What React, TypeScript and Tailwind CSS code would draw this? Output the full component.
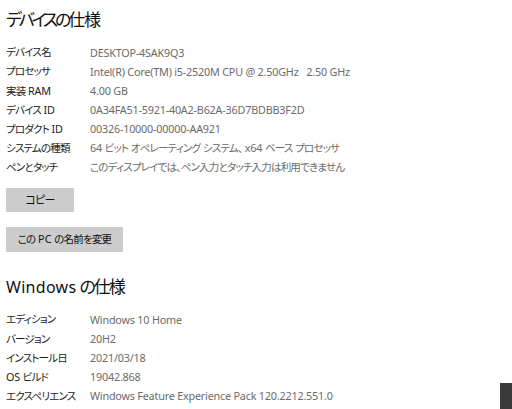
const font = "[font-family:'Segoe_UI','Noto_Sans','Noto_Sans_CJK_JP',sans-serif] [font-feature-settings:'palt']";

const device: [string, string][] = [
  ["デバイス名", "DESKTOP-4SAK9Q3"],
  ["プロセッサ", "Intel(R) Core(TM) i5-2520M CPU @ 2.50GHz   2.50 GHz"],
  ["実装 RAM", "4.00 GB"],
  ["デバイス ID", "0A34FA51-5921-40A2-B62A-36D7BDBB3F2D"],
  ["プロダクト ID", "00326-10000-00000-AA921"],
  ["システムの種類", "64 ビット オペレーティング システム、 x64 ベース プロセッサ"],
  ["ペンとタッチ", "このディスプレイでは、ペン入力とタッチ入力は利用できません"],
];

const windows: [string, string][] = [
  ["エディション", "Windows 10 Home"],
  ["バージョン", "20H2"],
  ["インストール日", "2021/03/18"],
  ["OS ビルド", "19042.868"],
  ["エクスペリエンス", "Windows Feature Experience Pack 120.2212.551.0"],
];

// Yu Gothic UI sets kana much tighter than Noto CJK, so squeeze the CJK runs
function Jp({ text, cls }: { text: string; cls: string }) {
  const parts = text.split(/([\u3000-\u30ff\u4e00-\u9fff\uff00-\uffef]+)/);
  return (
    <>
      {parts.map((p, i) =>
        i % 2 === 1 ? (
          <span key={i} className={cls}>
            {p}
          </span>
        ) : (
          p
        ),
      )}
    </>
  );
}

function SpecRows({ rows }: { rows: [string, string][] }) {
  return (
    <div className="flex flex-col">
      {rows.map(([k, v]) => (
        <div key={k} className="flex h-[19.2px] items-center text-[10.8px] tracking-[-0.2px]">
          <span className="w-[84px] shrink-0 whitespace-pre text-[#1b1b1b]">
            <Jp text={k} cls="text-[10.5px] tracking-[-0.8px]" />
          </span>
          <span className="whitespace-pre text-[#6b6b6b]">
            <Jp text={v} cls="text-[10.5px] tracking-[-0.8px]" />
          </span>
        </div>
      ))}
    </div>
  );
}

export default function App() {
  return (
    <div className={`relative h-[409px] w-[512px] overflow-hidden bg-white pl-[6px] ${font}`}>
      <h1 className="pt-[8px] text-[17px] leading-[24px] text-[#111]">
        <span className="tracking-[-3.2px]">デバイスの</span>
        <span className="tracking-[-1px]">仕様</span>
      </h1>
      <div className="mt-[11px]">
        <SpecRows rows={device} />
      </div>
      <button className="mt-[11px] h-[24px] w-[68px] bg-[#cccccc] text-[11px] text-[#111]">
        <Jp text="コピー" cls="tracking-[-0.8px]" />
      </button>
      <div className="mt-[13px]">
        <button className="h-[25px] w-[117px] bg-[#cccccc] text-[10.8px] text-[#111]">
          <Jp text="この PC の名前を変更" cls="text-[10.5px] tracking-[-0.8px]" />
        </button>
      </div>
      <h2 className="mt-[23px] text-[16px] leading-[24px] text-[#111]">
        <span className="tracking-[0.3px]">Windows</span>
        <span className="ml-[3px] text-[17px] tracking-[-2px]">の仕様</span>
      </h2>
      <div className="mt-[11px]">
        <SpecRows rows={windows} />
      </div>
      <div className="absolute left-[500px] top-[383px] h-[26px] w-[12px] bg-[#3a3a3a]" />
    </div>
  );
}
